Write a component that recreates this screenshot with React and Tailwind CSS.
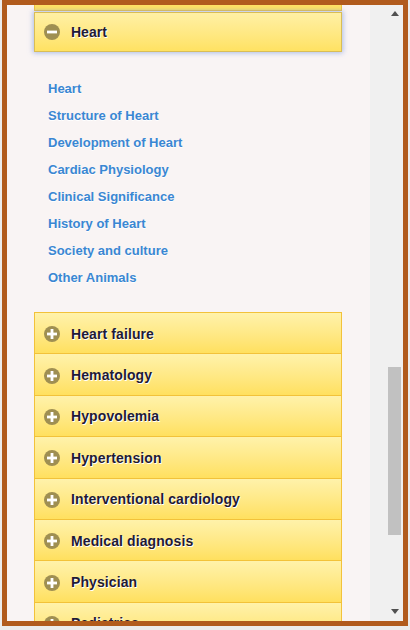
const links = [
  "Heart",
  "Structure of Heart",
  "Development of Heart",
  "Cardiac Physiology",
  "Clinical Significance",
  "History of Heart",
  "Society and culture",
  "Other Animals",
];

const topics = [
  "Heart failure",
  "Hematology",
  "Hypovolemia",
  "Hypertension",
  "Interventional cardiology",
  "Medical diagnosis",
  "Physician",
  "Pediatrics",
];

function ToggleIcon({ open }) {
  return (
    <svg viewBox="0 0 16 16" className="h-4 w-4 shrink-0">
      <circle cx="8" cy="8" r="8" fill="#9f8f52" />
      <rect x="3" y="6.6" width="10" height="2.8" fill="#fff" />
      {!open && <rect x="6.6" y="3" width="2.8" height="10" fill="#fff" />}
    </svg>
  );
}

function Triangle({ down }) {
  return (
    <svg viewBox="0 0 8 5" className="h-[5px] w-[8px]">
      <path d={down ? "M0 0H8L4 5Z" : "M4 0L8 5H0Z"} fill="#505050" />
    </svg>
  );
}

export default function App() {
  return (
    <div className="h-[630px] w-[410px] overflow-hidden bg-[#ececec] pl-[2px] font-['Liberation_Sans',Arial,sans-serif]">
      <div className="flex h-[626px] w-[406px] border-[5px] border-[#b15b1d]">
        <div className="flex h-full w-[363px] flex-col overflow-hidden bg-[#f9f4f4] pl-[27px]">
          <div className="h-[6px] w-[308px] shrink-0 border-x border-b border-[#f0c43e] bg-[#ffe263]" />
          <div className="mt-[1px] flex h-[40px] w-[308px] shrink-0 items-center gap-[11px] border border-[#d9bd55] bg-gradient-to-b from-[#fff0a4] to-[#ffe262] pl-[9px] shadow-[0_0_5px_1px_rgba(120,150,220,0.6)]">
            <ToggleIcon open />
            <span className="text-[14px] font-bold text-[#1f1b36] [text-shadow:1px_1px_0_#fff]">
              Heart
            </span>
          </div>
          <ul className="flex shrink-0 flex-col pb-[21px] pl-[14px] pt-[23px]">
            {links.map((l) => (
              <li
                key={l}
                className="flex h-[27px] items-center text-[13px] font-bold text-[#3a87d3] [text-shadow:0_1px_0_#fff]"
              >
                {l}
              </li>
            ))}
          </ul>
          <div className="flex w-[308px] shrink-0 flex-col">
            {topics.map((t) => (
              <div
                key={t}
                className="box-border flex h-[41.4px] shrink-0 items-center gap-[11px] border-x border-t border-[#f2c23a] bg-gradient-to-b from-[#fff2aa] to-[#ffe05e] pl-[9px] pt-[2px]"
              >
                <ToggleIcon />
                <span className="text-[14px] font-bold tracking-[0.1px] text-[#1f1b36] [text-shadow:1px_1px_0_#fff]">
                  {t}
                </span>
              </div>
            ))}
          </div>
        </div>
        <div className="flex h-full w-[33px] flex-col items-end bg-[#f0f0f0] pr-[2px]">
          <div className="flex h-[11px] w-[13px] items-end justify-center">
            <Triangle />
          </div>
          <div className="h-[351px]" />
          <div className="h-[168px] w-[13px] bg-[#c1c1c1]" />
          <div className="flex-1" />
          <div className="flex h-[12px] w-[13px] items-start justify-center">
            <Triangle down />
          </div>
        </div>
      </div>
    </div>
  );
}
